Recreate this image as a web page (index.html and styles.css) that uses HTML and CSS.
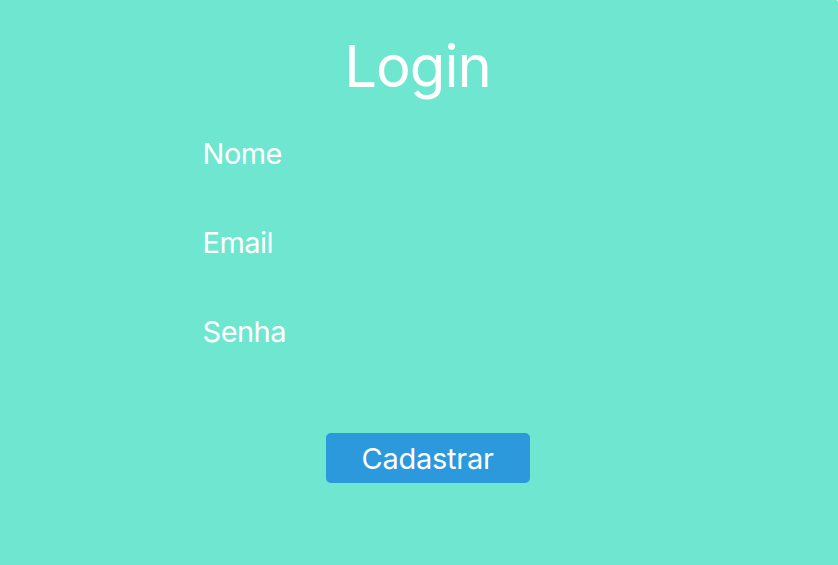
FILE: index.html
```html
<!DOCTYPE html>
<html lang="pt-BR">
<head>
<meta charset="utf-8">
<title>Login</title>
<link rel="stylesheet" href="styles.css">
</head>
<body>
<main class="page">
<h1 class="title">Login</h1>
<form class="form">
<div class="field">Nome</div>
<div class="field">Email</div>
<div class="field">Senha</div>
<button class="submit" type="button">Cadastrar</button>
</form>
</main>
</body>
</html>
```
FILE: styles.css
```css
* { box-sizing: border-box; }
body { margin: 0; background: #fff; color: #fff; font-family: Inter, sans-serif; }
.page { height: 565px; padding-top: 31px; overflow: hidden; background: #6fe6d0; border-top-right-radius: 2px; }
.title { margin: 0 3px 0 0; font-size: 58px; font-weight: 400; letter-spacing: -1px; line-height: 70px; text-align: center; }
.form { padding: 35px 0 0 202.6px; }
.field { height: 89px; font-size: 29px; font-weight: 400; letter-spacing: -0.55px; line-height: 35px; }
.submit { display: block; width: 204px; height: 50.5px; margin: 29.5px 0 0 123px; padding: 0; border: 0; border-radius: 5px; background: #2b99db; color: #fff; font: 400 29px/51px Inter, sans-serif; letter-spacing: -0.25px; }
```
